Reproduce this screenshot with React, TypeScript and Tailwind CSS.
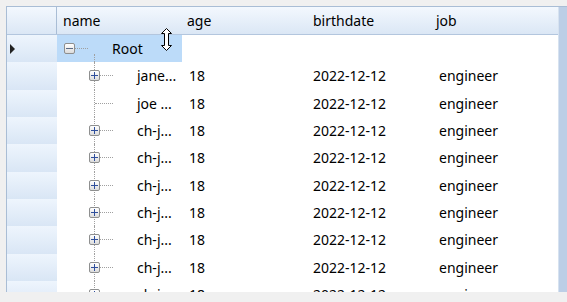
import React from "react";

const ROW_H = "h-[27.33px]";

function Box({ minus }: { minus?: boolean }) {
  return (
    <div className="w-[11px] h-[11px] shrink-0 rounded-[2px] border border-[#8e8f8f] bg-gradient-to-b from-white to-[#dcdcdc] flex items-center justify-center">
      <svg width="9" height="9" viewBox="0 0 9 9">
        <rect x="1" y="4" width="7" height="1" fill={minus ? "#5b6b86" : "#2f4f9c"} />
        {!minus && <rect x="4" y="1" width="1" height="7" fill="#2f4f9c" />}
      </svg>
    </div>
  );
}

function HDots({ w }: { w: number }) {
  return <div className="border-t border-dotted border-[#a0a0a0] h-0" style={{ width: w }} />;
}

type Row = { name: string; plus: boolean };

const rows: Row[] = [
  { name: "jane...", plus: true },
  { name: "joe ...", plus: false },
  { name: "ch-j...", plus: true },
  { name: "ch-j...", plus: true },
  { name: "ch-j...", plus: true },
  { name: "ch-j...", plus: true },
  { name: "ch-j...", plus: true },
  { name: "ch-j...", plus: true },
  { name: "ch-j...", plus: true },
];

function RowHeader({ selected }: { selected?: boolean }) {
  return (
    <div className={`w-[50px] shrink-0 ${ROW_H} bg-gradient-to-b from-[#eef5fd] to-[#d9e6f5] flex items-center pl-[3px]`}>
      {selected && (
        <svg width="6" height="10" viewBox="0 0 6 10">
          <polygon points="0,0 5,5 0,10" fill="#222" />
        </svg>
      )}
    </div>
  );
}

export default function App() {
  return (
    <div className="w-[567px] h-[302px] bg-[#f0f0f0] pt-[6px] pl-[6px] text-[14px] text-black font-['Noto_Sans',sans-serif] overflow-hidden">
      <div className="h-[286px] flex border-t border-l border-[#a9bdd5] overflow-hidden">
        <div className="w-[551px] shrink-0 flex flex-col bg-white overflow-hidden">
          {/* header */}
          <div className="flex h-[28px] shrink-0 bg-gradient-to-b from-[#f3f8fe] to-[#dbe7f5] border-b border-[#b3c6de]">
            <div className="w-[50px] shrink-0 border-r border-[#a9bdd5]" />
            <div className="w-[125px] shrink-0 pl-[6px] flex items-center">name</div>
            <div className="w-[124px] shrink-0 pl-[5px] flex items-center">age</div>
            <div className="w-[126px] shrink-0 pl-[7px] flex items-center">birthdate</div>
            <div className="w-[125px] shrink-0 pl-[4px] flex items-center">job</div>
          </div>
          {/* root row */}
          <div className={`flex shrink-0 ${ROW_H}`}>
            <RowHeader selected />
            <div className="w-[125px] shrink-0 bg-[#bcdbf9] relative flex items-center pl-[7px]">
              <Box minus />
              <HDots w={13} />
              <span className="ml-[24px]">Root</span>
              <div className="absolute left-[37px] top-[19px] bottom-0 border-l border-dotted border-[#a0a0a0]" />
              <svg className="absolute left-[104px] top-[-7px]" width="11" height="23" viewBox="0 0 11 23">
                <polygon
                  points="5.5,0.5 10.5,5.5 7.5,5.5 7.5,17.5 10.5,17.5 5.5,22.5 0.5,17.5 3.5,17.5 3.5,5.5 0.5,5.5"
                  fill="white"
                  stroke="black"
                  strokeWidth="1"
                  strokeLinejoin="miter"
                />
              </svg>
            </div>
            <div className="flex-1" />
          </div>
          {rows.map((r, i) => (
            <div key={i} className={`flex shrink-0 ${ROW_H}`}>
              <RowHeader />
              <div className="w-[125px] shrink-0 relative flex items-center">
                <div className="absolute left-[37px] top-0 bottom-0 border-l border-dotted border-[#a0a0a0]" />
                {r.plus ? (
                  <div className="flex items-center ml-[32px] relative">
                    <Box />
                    <HDots w={13} />
                  </div>
                ) : (
                  <div className="flex items-center ml-[38px]">
                    <HDots w={18} />
                  </div>
                )}
                <span className={r.plus ? "ml-[24px]" : "ml-[24px]"}>{r.name}</span>
              </div>
              <div className="w-[124px] shrink-0 pl-[7px] flex items-center">18</div>
              <div className="w-[126px] shrink-0 pl-[7px] flex items-center">2022-12-12</div>
              <div className="w-[125px] shrink-0 pl-[7px] flex items-center">engineer</div>
            </div>
          ))}
        </div>
        <div className="w-[10px] shrink-0 bg-[#bccee6] border-l border-[#d6e2f0]" />
      </div>
    </div>
  );
}
